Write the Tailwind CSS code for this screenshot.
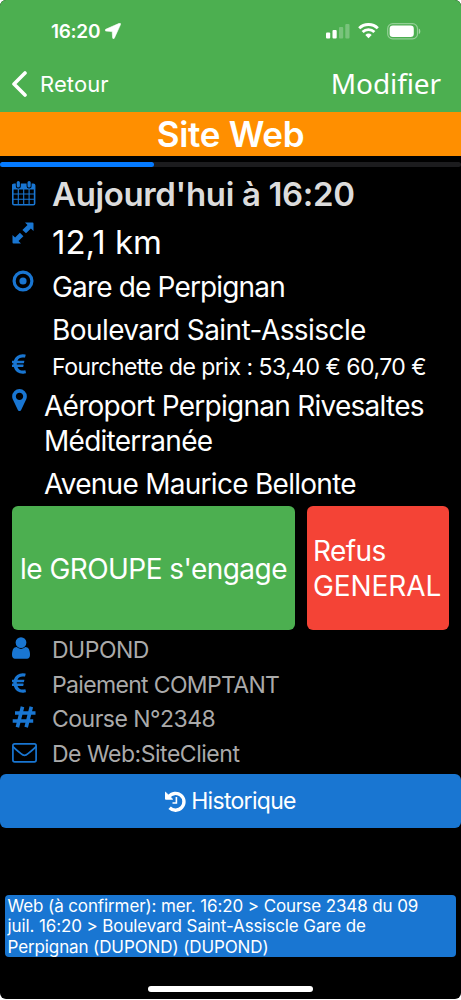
<!DOCTYPE html>
<html lang="fr">
<head>
<meta charset="utf-8">
<title>Course 2348</title>
<script src="https://cdn.jsdelivr.net/npm/@tailwindcss/browser@4"></script>
</head>
<body class="bg-white">
<svg class="hidden">
  <symbol id="euro" viewBox="386 128 1012 1408"><path d="M1360 1307l35 159q3 12-3 22.500t-17 14.500l-5 1q-4 2-10.500 3.500t-16 4.500-21.500 5.500-25.500 5-30 5-33.500 4.500-36.500 3-38.500 1q-234 0-409-130.500t-238-351.500h-95q-13 0-22.500-9.500t-9.500-22.500v-113q0-13 9.500-22.500t22.500-9.500h66q-2-57 1-105h-67q-14 0-23-9t-9-23v-114q0-14 9-23t23-9h98q67-210 243.500-338t400.500-128q102 0 194 23 11 3 20 15 6 11 3 24l-43 159q-3 13-14 19.500t-24 2.500l-4-1q-4-1-11.500-2.500l-17.500-3.500-22.500-3.500-26-3-29-2.500-29.500-1q-126 0-226 64t-150 176h468q16 0 25 12 10 12 7 26l-24 114q-5 26-32 26h-488q-3 37 0 105h459q15 0 25 12 9 12 6 27l-24 112q-2 11-11 18.500t-20 7.500h-387q48 117 149.500 185.500t228.500 68.500q18 0 36-1.500t33.500-3.500 29.500-4.500 24.500-5 18.500-4.500l12-3 5-2q13-5 26 2 12 7 15 21z"/></symbol>
</svg>
<div class="flex h-[999px] w-[461px] flex-col overflow-hidden rounded-[6px] bg-black font-['Inter',sans-serif] text-white">
  <header class="h-[112px] shrink-0 bg-[#4caf50]">
    <div class="flex h-[62px] items-center pl-[51px] pr-[40px]">
      <span class="pt-px text-[19px] font-semibold leading-[62px] tracking-[-0.3px]">16:20</span>
      <svg class="ml-[5px] h-[16px] w-[16px]" viewBox="0 0 16 16" fill="#fff"><path d="M14.300.3.7 6.300C-.2 6.800 0 8 1 8.100L7.200 8.600 7.600 14.800C7.700 15.900 8.900 16 9.300 15.200L15.500 1.600C15.900.6 15.200-.1 14.300.3Z" stroke="#fff" stroke-width=".6"/></svg>
      <div class="ml-auto flex items-center">
        <svg class="h-[16px] w-[24px]" viewBox="0 0 24 16" fill="#fff"><rect x="0" y="9.500" width="4.200" height="6" rx="1"/><rect x="6.500" y="7" width="4.200" height="8.500" rx="1"/><g opacity=".25"><rect x="13" y="4" width="4.200" height="11.500" rx="1"/><rect x="19.300" y="1" width="4.200" height="14.500" rx="1"/></g></svg>
        <svg class="ml-[8px] h-[16px] w-[21px]" viewBox="0 0 21 16" fill="none" stroke="#fff" stroke-width="2.900"><path d="M1.200 5.200a13.400 13.400 0 0 1 18.600 0"/><path d="M4.600 9a8.400 8.400 0 0 1 11.800 0"/><path d="M10.500 15.300 7.300 12a4.700 4.700 0 0 1 6.400 0Z" fill="#fff" stroke="none"/></svg>
        <svg class="ml-[8px] h-[17px] w-[34px]" viewBox="0 0 34 17"><rect x=".7" y=".7" width="29.800" height="15.200" rx="5" fill="none" stroke="#fff" stroke-opacity=".4" stroke-width="1.200"/><rect x="2.600" y="2.600" width="24.200" height="11.400" rx="3.300" fill="#fff"/><path d="M31.800 5.500c2 .8 2 4.800 0 5.600Z" fill="#fff" opacity=".5"/></svg>
      </div>
    </div>
    <div class="flex h-[44px] items-center pl-[12px] pr-[20px]">
      <svg class="h-[26px] w-[16px]" viewBox="0 0 16 26" fill="none" stroke="#fff" stroke-width="3.600" stroke-linecap="round" stroke-linejoin="round"><path d="M13 2 2 13 13 24"/></svg>
      <span class="ml-[12px] text-[22px] leading-[44px] tracking-[0.1px]">Retour</span>
      <span class="-mt-[3px] ml-auto font-['Noto_Sans',sans-serif] text-[28px] leading-[40px] tracking-[-0.1px]">Modifier</span>
    </div>
  </header>
  <h1 class="h-[44px] shrink-0 bg-[#ff8f00] text-center text-[35px] font-semibold leading-[44px] tracking-[-0.3px]">Site Web</h1>
  <div class="mt-[6px] h-[5px] shrink-0 rounded-full bg-[#1c1c1e]"><div class="h-full w-[154px] rounded-full bg-[#057aff]"></div></div>
  <main class="mt-[3px] shrink-0 text-[28px]">
    <div class="flex h-[48px] pl-[12px] text-[33px] font-semibold leading-[48px] tracking-[-0.36px] text-[#dcdcdc]">
      <svg class="mr-[16px] mt-[9.500px] h-[26px] w-[24px]" viewBox="0 0 24 26" fill="none" stroke="#1976d2"><rect x=".8" y="4.300" width="21.800" height="20.500" rx="1.300" stroke-width="1.600"/><path d="M.8 4.500H22.600V9H.8Z" fill="#1976d2"/><path d="M1 14H22.500M1 19.200H22.500M6.300 8V24.500M11.700 8V24.500M17.100 8V24.500" stroke-width="1.100"/><path d="M6.300 2.700V6M17.100 2.700V6" stroke="#000" stroke-width="5" stroke-linecap="round"/><path d="M6.300 2.500V6M17.100 2.500V6" stroke-width="3.200" stroke-linecap="round"/></svg>
      <span>Aujourd'hui à 16:20</span>
    </div>
    <div class="flex h-[48px] pl-[12px] text-[33px] leading-[48px]">
      <svg class="mr-[18px] mt-[4px] h-[22px] w-[22px]" viewBox="0 0 22 22" fill="#1976d2"><path d="M13 .5H20.500Q21.500.5 21.500 1.500V9L18.900 6.500 14 11.300 10.400 7.900 15.500 3.100ZM9 21.500H1.500Q.5 21.500.5 20.500V13L3.100 15.500 7.900 10.700 11.400 14.200 6.500 18.900Z"/></svg>
      <span>12,1 km</span>
    </div>
    <div class="flex h-[42px] pl-[12px] leading-[42px] tracking-[-0.84px]">
      <svg class="mr-[18px] mt-[4px] h-[22px] w-[22px]" viewBox="0 0 22 22"><circle cx="11" cy="11" r="8.900" fill="none" stroke="#1976d2" stroke-width="3.200"/><circle cx="11" cy="11" r="3.600" fill="#1976d2"/></svg>
      <span>Gare de Perpignan</span>
    </div>
    <div class="h-[43px] pl-[52px] leading-[44px] tracking-[-0.58px]">Boulevard Saint-Assiscle</div>
    <div class="flex h-[36px] pl-[12px] text-[23px] leading-[32px] tracking-[-0.52px]">
      <svg class="mr-[26px] mt-[3px] h-[20px] w-[14px]" fill="#1976d2"><use href="#euro"/></svg>
      <span>Fourchette de prix : 53,40 € 60,70 €</span>
    </div>
    <div class="flex h-[78px] pl-[12px] leading-[35px] tracking-[-0.74px]">
      <svg class="mr-[17px] mt-[1.500px] h-[22px] w-[15px] shrink-0" viewBox="384 128 1024 1536" fill="#1976d2"><path d="M1152 640q0-106-75-181t-181-75-181 75-75 181 75 181 181 75 181-75 75-181zm256 0q0 109-33 179l-364 774q-16 33-47.500 52t-67.500 19-67.500-19-46.500-52l-365-774q-33-70-33-179 0-212 150-362t362-150 362 150 150 362z"/></svg>
      <div class="pt-[1.500px]"><div>Aéroport Perpignan Rivesaltes</div><div>Méditerranée</div></div>
    </div>
    <div class="h-[41px] pl-[44px] pt-[1.500px] leading-[35px] tracking-[-0.72px]">Avenue Maurice Bellonte</div>
    <div class="flex h-[124px] gap-[12px] pl-[12px] pr-[12px]">
      <div class="flex w-[283px] items-center justify-center rounded-[6px] bg-[#4caf50] pt-[2px] whitespace-nowrap tracking-[-0.55px]">le GROUPE s'engage</div>
      <div class="flex w-[142px] items-center rounded-[6px] bg-[#f44336] pl-[6px] pt-[2px] leading-[35px]"><div><div class="tracking-[-0.6px]">Refus</div><div class="tracking-[-0.1px]">GENERAL</div></div></div>
    </div>
  </main>
  <section class="mt-[2px] shrink-0 text-[23px] leading-[36px] text-[#aaa]">
    <div class="flex h-[34.5px] pl-[12px]">
      <svg class="mr-[22px] mt-[5px] h-[22px] w-[18px]" viewBox="256 128 1280 1536" fill="#1976d2"><path d="M1536 1399q0 109-62.500 187t-150.500 78h-854q-88 0-150.500-78t-62.500-187q0-85 8.500-160.500t31.500-152 58.500-131 94-89 134.500-34.500q131 128 313 128t313-128q76 0 134.500 34.500t94 89 58.500 131 31.500 152 8.500 160.500zm-256-887q0 159-112.500 271.500t-271.500 112.500-271.500-112.500-112.500-271.500 112.500-271.500 271.500-112.500 271.500 112.500 112.500 271.500z"/></svg>
      <span class="tracking-[-0.5px]">DUPOND</span>
    </div>
    <div class="flex h-[34.5px] pl-[12px]">
      <svg class="mr-[26px] mt-[6px] h-[20px] w-[14px]" fill="#1976d2"><use href="#euro"/></svg>
      <span class="tracking-[-0.66px]">Paiement COMPTANT</span>
    </div>
    <div class="flex h-[34.5px] pl-[12px]">
      <svg class="mr-[16px] mt-[5px] h-[22px] w-[24px]" viewBox="0 0 24 22" fill="none" stroke="#1976d2" stroke-width="3.600"><path d="M10.500.8 5.400 21.200M19.300.8 14.200 21.200M3 7H23.500M.7 15H21.200"/></svg>
      <span class="tracking-[-0.52px]">Course N°2348</span>
    </div>
    <div class="flex h-[34.5px] pl-[12px]">
      <svg class="mr-[15px] mt-[7.500px] h-[20px] w-[25px]" viewBox="0 0 25 20" fill="none" stroke="#1976d2" stroke-width="1.700"><rect x=".9" y=".9" width="23.200" height="18" rx="1.800"/><path d="M1 3.500C2 5 5 7.500 9 10.700Q12.500 14 16 10.700C20 7.500 23 5 24 3.500"/></svg>
      <span class="tracking-[-0.48px]">De Web:SiteClient</span>
    </div>
  </section>
  <div class="mt-[4px] flex h-[54px] shrink-0 items-center justify-center rounded-[6px] bg-[#1976d2] text-[23px]">
    <svg class="mr-[5px] h-[21px] w-[21px]" viewBox="0 0 21 21" fill="none" stroke="#fff"><path d="M3.800 5.800A8.400 8.400 0 1 1 4.600 16.700" stroke-width="3.400"/><path d="M.5 1.200V8.200H7.600Z" fill="#fff" stroke="#fff" stroke-linejoin="round"/><path d="M11.400 6V12H7.500" stroke-width="1.600"/></svg>
    <span class="pt-px tracking-[-0.7px]">Historique</span>
  </div>
  <footer class="mx-[5px] mt-[67px] h-[62px] shrink-0 rounded-[4px] bg-[#1976d2] pl-[2.500px] pt-[0.500px] text-[17px] leading-[20.500px] tracking-[-0.11px] whitespace-nowrap">
    <div>Web (à confirmer): mer. 16:20 &gt; Course 2348 du 09</div>
    <div>juil. 16:20 &gt; Boulevard Saint-Assiscle Gare de</div>
    <div>Perpignan (DUPOND) (DUPOND)</div>
  </footer>
  <div class="mx-auto mt-[29px] h-[5.500px] w-[165px] shrink-0 rounded-full bg-white"></div>
</div>
</body>
</html>
